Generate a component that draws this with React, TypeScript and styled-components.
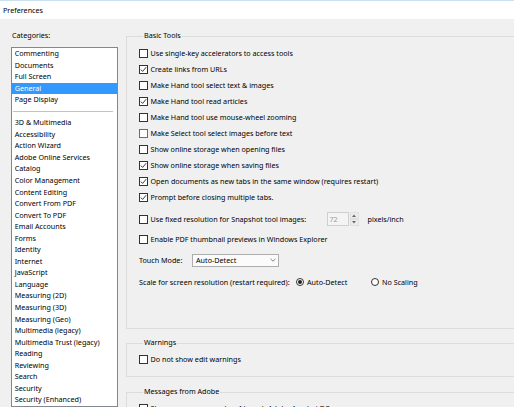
import React from 'react';
import styled, { createGlobalStyle } from 'styled-components';

const Global = createGlobalStyle`
  html, body { margin: 0; padding: 0; }
  body {
    width: 514px;
    height: 407px;
    overflow: hidden;
    background: #f0f0f0;
    font-family: "Noto Sans", "Open Sans", sans-serif;
    font-size: 7.2px;
    color: #000;
  }
`;

const Window = styled.div`
  width: 514px;
  height: 407px;
  display: flex;
  flex-direction: column;
  overflow: hidden;
`;

const TitleBar = styled.div`
  box-sizing: border-box;
  height: 19px;
  flex: none;
  background: #fff;
  border-top: 1px solid #c9e1ef;
  display: flex;
  align-items: center;
  padding-left: 3px;
  padding-bottom: 1px;
`;

const Content = styled.div`
  flex: 1;
  display: flex;
  gap: 8px;
  padding-left: 11px;
  min-height: 0;
`;

const LeftPane = styled.div`
  width: 107px;
  flex: none;
  display: flex;
  flex-direction: column;
`;

const PaneLabel = styled.div`
  margin-top: 10px;
  line-height: 12px;
  padding-left: 1px;
`;

const ListBox = styled.div`
  margin-top: 6px;
  box-sizing: border-box;
  height: 400px;
  background: #fff;
  border: 1px solid #828790;
  display: flex;
  flex-direction: column;
`;

const ListItem = styled.div<{ $selected?: boolean }>`
  flex: none;
  height: 11.55px;
  line-height: 11.55px;
  padding-left: 2.7px;
  white-space: nowrap;
  background: ${(p) => (p.$selected ? '#3399ff' : 'transparent')};
  color: ${(p) => (p.$selected ? '#fff' : '#000')};
`;

const ListSeparator = styled.div`
  flex: none;
  height: 11.55px;
  display: flex;
  align-items: center;
  padding: 0 4px 0 1px;
  &::after {
    content: '';
    flex: 1;
    height: 1px;
    background: #a9c9e8;
  }
`;

const RightPane = styled.div`
  width: 400px;
  flex: none;
  display: flex;
  flex-direction: column;
`;

const Group = styled.fieldset<{ $mt: number; $pt: number; $pb: number }>`
  margin: ${(p) => p.$mt}px 0 0 0;
  padding: ${(p) => p.$pt}px 0 ${(p) => p.$pb}px 12px;
  border: 1px solid #dcdcdc;
  min-width: 0;
  display: flex;
  flex-direction: column;
`;

const Legend = styled.legend`
  margin-left: 4px;
  padding: 0 1px 2px 1px;
  line-height: 12px;
`;

const Row = styled.div<{ $mt?: number }>`
  height: 16px;
  flex: none;
  display: flex;
  align-items: center;
  margin-top: ${(p) => p.$mt ?? 0}px;
  white-space: nowrap;
`;

const CheckLabel = styled.label`
  display: flex;
  align-items: center;
  gap: 2.5px;
  white-space: nowrap;
`;

const Box = styled.span<{ $hot?: boolean }>`
  box-sizing: border-box;
  width: 9px;
  height: 9px;
  flex: none;
  border: 1px solid ${(p) => (p.$hot ? '#1e7fd8' : '#333')};
  background: #fff;
  display: flex;
  align-items: center;
  justify-content: center;
`;

const FixedText = styled.span<{ $w: number }>`
  display: inline-block;
  width: ${(p) => p.$w}px;
  flex: none;
`;

const SpinField = styled.div`
  box-sizing: border-box;
  width: 22px;
  height: 14px;
  border: 1px solid #cfcfcf;
  background: #f4f4f4;
  color: #9a9a9a;
  line-height: 12px;
  padding-left: 2px;
  flex: none;
`;

const SpinButtons = styled.div`
  margin-left: 1px;
  width: 9px;
  height: 14px;
  display: flex;
  flex-direction: column;
  flex: none;
`;

const SpinButton = styled.div`
  flex: 1;
  display: flex;
  align-items: center;
  justify-content: center;
  background: #ececec;
  border: 0.5px solid #e0e0e0;
`;

const Unit = styled.span`
  margin-left: 9px;
`;

const Select = styled.div`
  box-sizing: border-box;
  width: 87px;
  height: 13px;
  border: 1px solid #adadad;
  background: #fbfbfb;
  display: flex;
  align-items: center;
  flex: none;
`;

const SelectValue = styled.span`
  flex: 1;
  padding-left: 3px;
`;

const SelectArrow = styled.span`
  width: 10px;
  height: 100%;
  display: flex;
  align-items: center;
  justify-content: center;
`;

const RadioLabel = styled.label<{ $w?: number }>`
  display: flex;
  align-items: center;
  gap: 3px;
  width: ${(p) => (p.$w ? `${p.$w}px` : 'auto')};
  flex: none;
`;

const RadioCircle = styled.span<{ $on?: boolean }>`
  box-sizing: border-box;
  width: 8px;
  height: 8px;
  border-radius: 50%;
  border: 1px solid #333;
  background: #fff;
  display: flex;
  align-items: center;
  justify-content: center;
  flex: none;
  &::after {
    content: '';
    width: 4px;
    height: 4px;
    border-radius: 50%;
    background: ${(p) => (p.$on ? '#222' : 'transparent')};
  }
`;

const Check = () => (
  <svg width="7" height="7" viewBox="0 0 7 7">
    <polyline points="0.8,3.6 2.6,5.4 6.2,1.2" fill="none" stroke="#222" strokeWidth="0.9" />
  </svg>
);

const CheckBox: React.FC<{ checked?: boolean; hot?: boolean; children: React.ReactNode }> = ({
  checked,
  hot,
  children,
}) => (
  <CheckLabel>
    <Box $hot={hot}>{checked && <Check />}</Box>
    {children}
  </CheckLabel>
);

const topItems = ['Commenting', 'Documents', 'Full Screen', 'General', 'Page Display'];
const otherItems = [
  '3D & Multimedia',
  'Accessibility',
  'Action Wizard',
  'Adobe Online Services',
  'Catalog',
  'Color Management',
  'Content Editing',
  'Convert From PDF',
  'Convert To PDF',
  'Email Accounts',
  'Forms',
  'Identity',
  'Internet',
  'JavaScript',
  'Language',
  'Measuring (2D)',
  'Measuring (3D)',
  'Measuring (Geo)',
  'Multimedia (legacy)',
  'Multimedia Trust (legacy)',
  'Reading',
  'Reviewing',
  'Search',
  'Security',
  'Security (Enhanced)',
];

const basicChecks: { label: string; checked?: boolean; hot?: boolean }[] = [
  { label: 'Use single-key accelerators to access tools' },
  { label: 'Create links from URLs', checked: true },
  { label: 'Make Hand tool select text & images' },
  { label: 'Make Hand tool read articles', checked: true },
  { label: 'Make Hand tool use mouse-wheel zooming' },
  { label: 'Make Select tool select images before text', hot: true },
  { label: 'Show online storage when opening files' },
  { label: 'Show online storage when saving files', checked: true },
  { label: 'Open documents as new tabs in the same window (requires restart)', checked: true },
  { label: 'Prompt before closing multiple tabs.', checked: true },
];

export default function App() {
  return (
    <>
      <Global />
      <Window>
        <TitleBar>Preferences</TitleBar>
        <Content>
          <LeftPane>
            <PaneLabel>Categories:</PaneLabel>
            <ListBox>
              {topItems.map((t) => (
                <ListItem key={t} $selected={t === 'General'}>
                  {t}
                </ListItem>
              ))}
              <ListSeparator />
              {otherItems.map((t) => (
                <ListItem key={t}>{t}</ListItem>
              ))}
            </ListBox>
          </LeftPane>
          <RightPane>
            <Group $mt={10} $pt={2} $pb={38}>
              <Legend>Basic Tools</Legend>
              {basicChecks.map((c) => (
                <Row key={c.label}>
                  <CheckBox checked={c.checked} hot={c.hot}>
                    {c.label}
                  </CheckBox>
                </Row>
              ))}
              <Row $mt={6}>
                <CheckBox>
                  <FixedText $w={176}>Use fixed resolution for Snapshot tool images:</FixedText>
                </CheckBox>
                <SpinField>72</SpinField>
                <SpinButtons>
                  <SpinButton>
                    <svg width="4" height="3" viewBox="0 0 4 3">
                      <polygon points="0,3 2,0.5 4,3" fill="#666" />
                    </svg>
                  </SpinButton>
                  <SpinButton>
                    <svg width="4" height="3" viewBox="0 0 4 3">
                      <polygon points="0,0 4,0 2,2.5" fill="#666" />
                    </svg>
                  </SpinButton>
                </SpinButtons>
                <Unit>pixels/inch</Unit>
              </Row>
              <Row $mt={4}>
                <CheckBox>Enable PDF thumbnail previews in Windows Explorer</CheckBox>
              </Row>
              <Row $mt={5}>
                <FixedText $w={53}>Touch Mode:</FixedText>
                <Select>
                  <SelectValue>Auto-Detect</SelectValue>
                  <SelectArrow>
                    <svg width="6" height="4" viewBox="0 0 6 4">
                      <polyline points="0.5,0.8 3,3.2 5.5,0.8" fill="none" stroke="#777" strokeWidth="0.9" />
                    </svg>
                  </SelectArrow>
                </Select>
              </Row>
              <Row $mt={6}>
                <FixedText $w={157}>Scale for screen resolution (restart required):</FixedText>
                <RadioLabel $w={75}>
                  <RadioCircle $on />
                  Auto-Detect
                </RadioLabel>
                <RadioLabel>
                  <RadioCircle />
                  No Scaling
                </RadioLabel>
              </Row>
            </Group>
            <Group $mt={7} $pt={1} $pb={9}>
              <Legend>Warnings</Legend>
              <Row>
                <CheckBox>Do not show edit warnings</CheckBox>
              </Row>
            </Group>
            <Group $mt={8} $pt={1} $pb={9}>
              <Legend>Messages from Adobe</Legend>
              <Row>
                <CheckBox>Show me messages when I launch Adobe Acrobat DC</CheckBox>
              </Row>
            </Group>
          </RightPane>
        </Content>
      </Window>
    </>
  );
}
